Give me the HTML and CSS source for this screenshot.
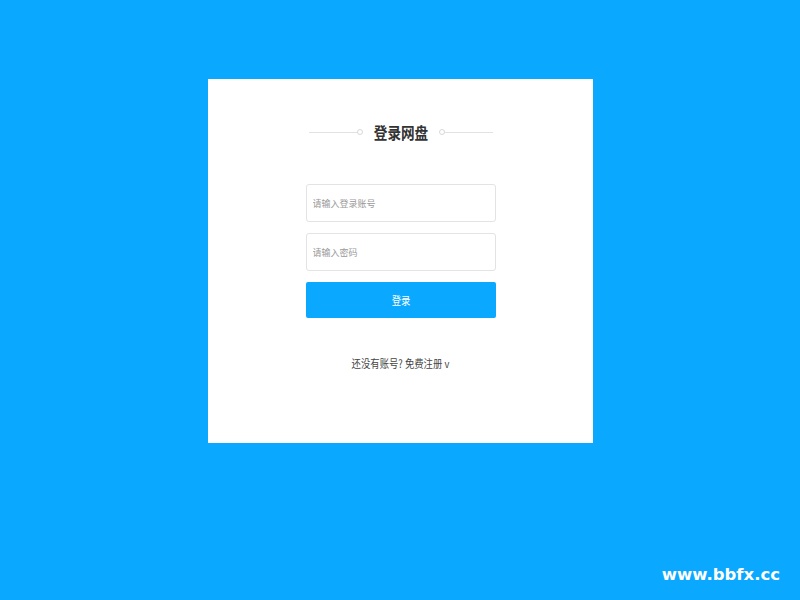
FILE: index.html
```html
<!DOCTYPE html>
<html lang="zh">
<head>
<meta charset="utf-8">
<link rel="stylesheet" href="styles.css">
</head>
<body>
<div class="page">
  <div class="card">
    <div class="title-row">
      <span class="line"></span><span class="dot"></span>
      <h1 class="title">登录网盘</h1>
      <span class="dot"></span><span class="line"></span>
    </div>
    <form class="form">
      <input class="field" type="text" placeholder="请输入登录账号">
      <input class="field" type="password" placeholder="请输入密码">
      <button class="btn" type="button"><span class="narrow">登录</span></button>
    </form>
    <div class="reg"><span class="narrow">还没有账号? 免费注册 v</span></div>
  </div>
  <div class="mark">www.bbfx.cc</div>
</div>
</body>
</html>
```
FILE: styles.css
```css
html, body { margin: 0; padding: 0; }
body {
  width: 800px; height: 600px; overflow: hidden;
  background: #0aa8ff;
  font-family: "Noto Sans CJK SC", "Liberation Sans", sans-serif;
}
.page { position: relative; width: 800px; height: 600px; padding-top: 79px; box-sizing: border-box; }
.card {
  width: 385px; height: 364px; margin-left: 208px;
  background: #fff; box-sizing: border-box;
  padding-top: 34px;
  display: flex; flex-direction: column; align-items: center;
}
.narrow { display: inline-block; transform: scaleX(0.85); }
.title-row { display: flex; align-items: center; height: 38px; }
.line { width: 48px; height: 1px; background: #e2e2e2; }
.dot { width: 4px; height: 4px; border: 1px solid #d8d8d8; border-radius: 50%; }
.title {
  margin: 0 2px; font-size: 16px; font-weight: bold; color: #333;
  width: 72px; text-align: center; transform: scaleX(0.85);
}
.form { margin-top: 33px; width: 190px; display: flex; flex-direction: column; }
.field {
  height: 38px; box-sizing: border-box; border: 1px solid #e3e3e3; border-radius: 3px;
  padding: 0 6px; font-size: 9px; margin-bottom: 11px; outline: none;
  font-family: "Noto Sans CJK SC", sans-serif; color: #333;
}
.field::placeholder { color: #999; }
.btn {
  height: 36px; border: none; border-radius: 2px; background: #0aa8ff; color: #fff;
  font-size: 11px; font-family: "Noto Sans CJK SC", sans-serif; padding: 0;
}
.reg { margin-top: 37px; font-size: 11px; color: #444; }
.mark {
  position: absolute; right: 20px; bottom: 16px;
  color: #fff; font-family: "DejaVu Sans", sans-serif; font-weight: bold; font-size: 16.5px;
}
```
